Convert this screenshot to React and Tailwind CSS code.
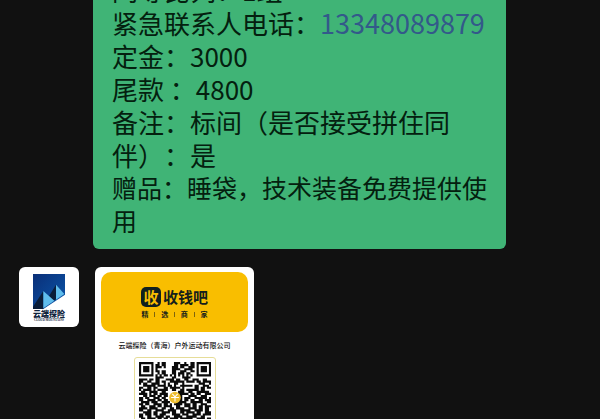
import { Fragment } from "react";

// ===== DATA =====
const QR_ROWS = [
  "#######..#.##....###..#..##.#######",
  "#.....#.##.##....##.####.##.#.....#",
  "#.###.#.###.#...###.##..###.#.###.#",
  "#.###.#.#.......####..####..#.###.#",
  "#.###.#.##.##...##..###..##.#.###.#",
  "#.....#..#.##...##.###.##...#.....#",
  "#######.#.#.##.#.#.#.#.#.#..#######",
  "........####....##...####..........",
  "####.##.##...####.##..##..###..##..",
  "##..##..##.##..#######.####.##.####",
  "#.##..####..#.#..##..#.......###..#",
  "..######.####.##.#..######.##..###.",
  "##..##.##...##.#####.#.....##.##.##",
  "#.####.#.#####..##..##.######.##...",
  ".##..####..##......###..##..######.",
  "####.#.##.####.....#####.##.##..###",
  "..##.###.##.##.....##...####..###..",
  "##.##..###.##......##.###..######.#",
  "##..####.##.##.....##.##.##..##.###",
  ".####.###..####...#####..######..##",
  "##.##..####.##.#.####.###.##..###..",
  ".##..###.##.####..##..###.##.##.###",
  "####.####..##..##.####..####.##.##.",
  "##..##..####..####..#####..####.##.",
  "..####.##..####.##..##.####.##..###",
  "##.###.##.###...####.###..####.####",
  "##..##..####.##..####..#####..##...",
  ".##.####.##.##.####.######..####.##",
  "........##..##..###.##..#...#.##.##",
  "#######..####.##.##.#####.#.#.#####",
  "#.....#.##..##.###..##.##...#.##...",
  "#.###.#..##.####.##..##.#####.####.",
  "#.###.#.####..#.####.##..##.###..##",
  "#.....#.##..###.##..####.##..####..",
  "#######..##.##..##.##..####.##..###",
];

const TAGLINE = ["精", "选", "商", "家"];

// ===== ICONS =====
const MountainLogo = () => (
  <svg viewBox="0 0 96 105" className="h-[35px] w-8" aria-hidden="true">
    <defs>
      <linearGradient id="sky" x1="0" y1="0" x2="1" y2="1">
        <stop offset="0" stopColor="#0a2f78" />
        <stop offset="1" stopColor="#0b56aa" />
      </linearGradient>
    </defs>
    <path d="M0 0H96V62L31 105H0Z" fill="url(#sky)" />
    <path d="M0 98L31 51V105H0Z" fill="#0a1d38" />
    <path d="M48 66L69 32V76L56 84Z" fill="#0a1d38" />
    <path d="M31 51L64 80L31 103Z" fill="#5fbdec" />
    <path d="M69 32L94 60L69 77Z" fill="#5fbdec" />
  </svg>
);

const QrCode = () => (
  <svg
    viewBox="0 0 35 35"
    className="block w-full"
    role="img"
    aria-label="二维码"
  >
    <path
      fill="#0a0a0a"
      d={QR_ROWS.flatMap((row, y) =>
        [...row].map((c, x) => (c === "#" ? `M${x} ${y}h1.04v1.04h-1.04z` : ""))
      ).join("")}
    />
    <circle cx="17.5" cy="17.3" r="2.8" fill="#edbd2d" />
    <path
      d="M16.2 15.5l1.3 1.4 1.3-1.4M15.6 17.3h3.8M17.5 17v2.2"
      stroke="#fff"
      strokeWidth="0.5"
      fill="none"
    />
  </svg>
);

// ===== MESSAGES =====
const TextBubble = () => (
  <div className="-mt-[37px] rounded-md bg-[#40b476] px-[19px] pt-[10px] pb-3 text-[26px] leading-[33px] whitespace-nowrap text-[#04200f] [text-spacing-trim:space-all]">
    <p>同等比列：1组</p>
    <p>
      紧急联系人电话：
      <a href="tel:13348089879" className="text-[27px] text-[#33598a]">
        13348089879
      </a>
    </p>
    <p>定金：3000</p>
    <p>尾款 ：4800</p>
    <p>备注：标间（是否接受拼住同</p>
    <p>伴）：是</p>
    <p className="text-[25px] whitespace-normal">
      赠品：睡袋，技术装备免费提供使用
    </p>
  </div>
);

const Avatar = () => (
  <div className="flex size-[60px] shrink-0 flex-col items-center rounded-md bg-white pt-[7px]">
    <MountainLogo />
    <span className="text-[8px] leading-[10px] font-black text-[#10243c]">
      云端探险
    </span>
    <span className="font-['Liberation_Serif',serif] text-[3px] leading-[3px] font-bold text-[#10243c]">
      CLOUD MOUNTAINS
    </span>
  </div>
);

const PayCard = () => (
  <div className="flex w-[159px] flex-col items-center rounded-md bg-white px-[6px] pt-[5px] pb-4">
    <div className="flex h-[60px] w-full flex-col items-center rounded-[10px] bg-[#f9be00] pt-[15px] text-[#14201c]">
      <div className="flex h-5 items-center gap-[2px]">
        <span className="flex size-5 items-center justify-center rounded-[5px] bg-[#10201f] text-[15px] leading-5 font-bold text-[#f9be00]">
          收
        </span>
        <span className="text-[15px] leading-5 font-bold">收钱吧</span>
      </div>
      <div className="mt-[3px] flex w-[66px] items-center justify-between text-[7px] leading-[8px] font-bold">
        {TAGLINE.map((word, i) => (
          <Fragment key={word}>
            {i > 0 && <span className="h-[5px] w-px bg-[#7d6410]" />}
            <span>{word}</span>
          </Fragment>
        ))}
      </div>
    </div>

    <p className="mt-2 text-[7px] leading-[10px] font-medium whitespace-nowrap text-[#111]">
      云端探险（青海）户外运动有限公司
    </p>

    <div className="mt-[7px] w-[82px] rounded-[3px] border border-[#e6dd98] p-1">
      <QrCode />
    </div>
  </div>
);

const App = () => {
  return (
    <main
      lang="zh-CN"
      className="h-screen overflow-hidden bg-[#111111] font-['Noto_Sans_CJK_SC',sans-serif]"
    >
      <div className="flow-root pr-[94px] pl-[93px]">
        <TextBubble />
      </div>
      <div className="mt-[18px] flex items-start gap-4 pl-[19px]">
        <Avatar />
        <PayCard />
      </div>
    </main>
  );
};

export default App;
